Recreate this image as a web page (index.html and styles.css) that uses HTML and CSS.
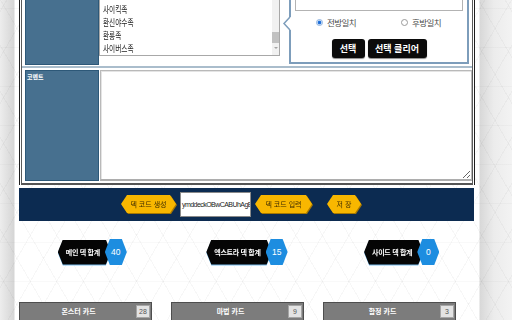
FILE: index.html
```html
<!DOCTYPE html>
<html lang="ko">
<head>
<meta charset="utf-8">
<title>덱 편집</title>
<link rel="stylesheet" href="styles.css">
</head>
<body>
<div class="page">
  <div class="main">
    <div class="main-inner">
      <div class="row-top">
        <div class="label-cell"></div>
        <div class="list">
          <ul class="list-items">
            <li><span>사이킥족</span></li>
            <li><span>환신야수족</span></li>
            <li><span>환룡족</span></li>
            <li><span>사이버스족</span></li>
          </ul>
          <div class="scrollbar">
            <div class="thumb"></div>
            <div class="arrow-down"></div>
          </div>
        </div>
        <div class="callout">
          <svg class="callout-arrow" width="10" height="13" viewBox="0 0 10 13">
            <polygon points="8,0 2,6.5 8,13 10,13 10,0" fill="#fff"/>
            <polyline points="8,0 2,6.5 8,13" fill="none" stroke="#7d9dbb" stroke-width="1.5"/>
          </svg>
          <div class="callout-box"></div>
          <div class="radios">
            <div class="radio-item"><span class="radio on"></span><span class="radio-label">전방일치</span></div>
            <div class="radio-item"><span class="radio"></span><span class="radio-label">후방일치</span></div>
          </div>
          <div class="callout-buttons">
            <button class="btn-black btn-sel">선택</button>
            <button class="btn-black btn-clear">선택 클리어</button>
          </div>
        </div>
      </div>
      <div class="divider"></div>
      <div class="row-comment">
        <div class="label-cell"><span class="label-text">코멘트</span></div>
        <textarea class="comment"></textarea>
      </div>
    </div>
  </div>

  <div class="codebar">
    <div class="ybtn ybtn-gen"><span class="ybtn-face">덱 코드 생성</span></div>
    <div class="code-input">ymddeckOBwCABUhAgE</div>
    <div class="ybtn ybtn-in"><span class="ybtn-face">덱 코드 입력</span></div>
    <div class="ybtn ybtn-save"><span class="ybtn-face">저 장</span></div>
  </div>

  <div class="totals">
    <div class="total">
      <div class="hex-wrap"><span class="hex-black">메인 덱 합계</span></div>
      <span class="badge">40</span>
    </div>
    <div class="total">
      <div class="hex-wrap"><span class="hex-black">엑스트라 덱 합계</span></div>
      <span class="badge">15</span>
    </div>
    <div class="total">
      <div class="hex-wrap"><span class="hex-black">사이드 덱 합계</span></div>
      <span class="badge">0</span>
    </div>
  </div>

  <div class="cards">
    <div class="card-col">
      <div class="card-head"><span class="card-title">몬스터 카드</span><span class="card-count">28</span></div>
    </div>
    <div class="card-col">
      <div class="card-head"><span class="card-title">마법 카드</span><span class="card-count">9</span></div>
    </div>
    <div class="card-col">
      <div class="card-head"><span class="card-title">함정 카드</span><span class="card-count">3</span></div>
    </div>
  </div>
</div>
</body>
</html>
```

FILE: styles.css
```css
html, body {
  margin: 0;
  padding: 0;
}

body {
  height: 320px;
  overflow: hidden;
  background:
    repeating-linear-gradient(60deg, transparent 0 22px, rgba(0,0,0,0.03) 22px 23px),
    repeating-linear-gradient(-60deg, transparent 0 22px, rgba(0,0,0,0.03) 22px 23px),
    repeating-linear-gradient(0deg, transparent 0 38px, rgba(0,0,0,0.025) 38px 39px),
    linear-gradient(to right, #ededed 0, #d5d5d5 14px, #ffffff 15px, #ffffff 479px, #d8d8d8 480px, #ececec 494px, #f3f3f3 512px);
  font-family: "Noto Sans CJK KR", "Liberation Sans", sans-serif;
}

.page {
  margin-left: 15px;
  width: 464px;
}

/* main framed table */
.main {
  margin-left: 4px;
  width: 456px;
  box-sizing: border-box;
  border-left: 1px solid #1e1e1e;
  border-right: 1px solid #1e1e1e;
  padding: 0 1px;
  margin-bottom: 3px;
  background: #fff;
}

.main-inner {
  border-left: 1px solid #5a5a5a;
  border-right: 1px solid #5a5a5a;
  border-bottom: 2px solid #555;
  padding: 0 0 2px 3px;
}

.label-cell {
  width: 74px;
  box-sizing: border-box;
  background: #47708f;
  border: 1px solid #2d5878;
  border-top: 0;
  flex: none;
}

.row-top {
  display: flex;
  height: 65px;
}

.row-top .label-cell {
  height: 65px;
}

/* list box */
.list {
  width: 181px;
  height: 56px;
  box-sizing: border-box;
  border: 1px solid #a8a8a8;
  border-top: 0;
  display: flex;
  background: #fff;
  flex: none;
}

.list-items {
  list-style: none;
  margin: 0;
  padding: 0 0 0 3px;
  flex: 1;
  overflow: hidden;
}

.list-items li {
  height: 13px;
  line-height: 13px;
  white-space: nowrap;
}

.list-items span {
  display: inline-block;
  font-size: 9.5px;
  color: #222;
  transform: scaleX(0.7);
  transform-origin: left center;
}

.scrollbar {
  width: 7px;
  background: #f1f1f1;
  display: flex;
  flex-direction: column;
  align-items: center;
}

.thumb {
  width: 7px;
  height: 11px;
  margin-top: 32px;
  background: #c1c1c1;
}

.arrow-down {
  margin-top: 4px;
  width: 0;
  height: 0;
  border-left: 2px solid transparent;
  border-right: 2px solid transparent;
  border-top: 2px solid #a3a3a3;
}

/* callout panel */
.callout {
  position: relative;
  margin-left: 9px;
  width: 180px;
  height: 64px;
  box-sizing: border-box;
  border: 2px solid #7d9dbb;
  border-top: 0;
  background: #fff;
  flex: none;
  display: flex;
  flex-direction: column;
}

.callout-arrow {
  position: absolute;
  left: -9px;
  top: 17px;
}

.callout-box {
  margin: 0 4px;
  height: 11px;
  box-sizing: border-box;
  border: 1px solid #b3b3b3;
  border-top: 0;
}

.radios {
  display: grid;
  grid-template-columns: 85px 1fr;
  margin-top: 5px;
  height: 12px;
  padding-left: 25px;
}

.radio-item {
  display: flex;
  align-items: center;
  gap: 4px;
}

.radio {
  width: 7px;
  height: 7px;
  box-sizing: border-box;
  border-radius: 50%;
  border: 1px solid #9a9a9a;
  background: #fff;
  flex: none;
}

.radio.on {
  border-color: #8fb4e0;
  background: radial-gradient(circle, #1966d2 0, #2a7ae0 45%, #cfe0f5 60%, #ffffff 100%);
}

.radio-label {
  font-size: 8.5px;
  letter-spacing: -0.6px;
  color: #4a4a4a;
  line-height: 12px;
}

.callout-buttons {
  display: flex;
  justify-content: center;
  gap: 3px;
  margin-top: 11px;
}

.btn-black {
  height: 19px;
  border: 0;
  border-radius: 3px;
  background: #0b0b0b;
  color: #fff;
  font-family: "Noto Sans CJK KR", sans-serif;
  font-weight: bold;
  font-size: 9px;
  line-height: 19px;
  padding: 0;
  box-shadow: 0 1px 1px #8a8a8a;
}

.btn-sel {
  width: 33px;
}

.btn-clear {
  width: 59px;
}

.divider {
  margin: 1px 0 2px -3px;
  height: 2px;
  background: #aabdcc;
}

/* comment row */
.row-comment {
  display: flex;
  height: 111px;
}

.row-comment .label-cell {
  height: 111px;
  border-top: 1px solid #2d5878;
  padding: 2px 0 0 1px;
}

.label-text {
  display: block;
  font-size: 6px;
  font-weight: bold;
  color: #fff;
  line-height: 7px;
}

.comment {
  margin: 0 0 0 1px;
  width: 372px;
  height: 111px;
  box-sizing: border-box;
  border: 1px solid #b9b9b9;
  border-bottom: 2px solid #adadad;
  box-shadow: inset 1px 1px 0 #e4e4e4;
  padding: 0;
  resize: both;
  background: #fff;
}

/* deck code bar */
.codebar {
  margin-left: 4px;
  width: 455px;
  height: 33px;
  background: #0c2b51;
  display: flex;
  align-items: center;
  padding-left: 102px;
  box-sizing: border-box;
}

.ybtn {
  filter: drop-shadow(1px 1px 0 #a77800);
  height: 19px;
  flex: none;
}

.ybtn-face {
  display: flex;
  align-items: center;
  justify-content: center;
  height: 18px;
  background: #f8b700;
  clip-path: polygon(6px 0, calc(100% - 6px) 0, 100% 50%, calc(100% - 6px) 100%, 6px 100%, 0 50%);
  font-size: 7px;
  color: #3b2a00;
  white-space: nowrap;
}

.ybtn-gen .ybtn-face { width: 55px; }
.ybtn-in .ybtn-face { width: 57px; }
.ybtn-save .ybtn-face { width: 34px; }

.code-input {
  margin: 0 4px;
  width: 71px;
  height: 25px;
  box-sizing: border-box;
  background: #fff;
  border: 1px solid #8a8a8a;
  font-family: "Liberation Sans", sans-serif;
  font-size: 7px;
  letter-spacing: -0.55px;
  line-height: 23px;
  color: #222;
  padding-left: 1px;
  overflow: hidden;
  white-space: nowrap;
  flex: none;
}

.ybtn-save {
  margin-left: 15px;
}

/* totals */
.totals {
  margin-top: 18px;
  display: grid;
  grid-template-columns: repeat(3, 1fr);
  justify-items: center;
  height: 26px;
}

.total {
  display: flex;
  align-items: center;
}

.hex-wrap {
  filter: drop-shadow(0 1px 0 #78bdee);
}

.hex-black {
  display: flex;
  align-items: center;
  height: 25px;
  padding: 0 11px 0 8px;
  background: #050505;
  clip-path: polygon(5px 0, calc(100% - 5px) 0, 100% 50%, calc(100% - 5px) 100%, 5px 100%, 0 50%);
  color: #fff;
  font-weight: bold;
  font-size: 7px;
  letter-spacing: -0.3px;
  white-space: nowrap;
}

.badge {
  margin-left: -6px;
  width: 22px;
  height: 26px;
  display: flex;
  align-items: center;
  justify-content: center;
  background: #1d8de0;
  clip-path: polygon(5px 0, calc(100% - 5px) 0, 100% 50%, calc(100% - 5px) 100%, 5px 100%, 0 50%);
  color: #fff;
  font-family: "Liberation Sans", sans-serif;
  font-size: 8.5px;
  position: relative;
}

/* card sections */
.cards {
  margin-top: 37px;
  margin-left: 4px;
  display: grid;
  grid-template-columns: repeat(3, 133px);
  column-gap: 19px;
}

.card-head {
  height: 20px;
  box-sizing: border-box;
  background: #7c7c7c;
  border: 1px solid #4e4e4e;
  display: flex;
  align-items: flex-start;
  padding: 2px 1px 0 1px;
}

.card-title {
  flex: 1;
  text-align: center;
  color: #fff;
  font-weight: bold;
  font-size: 7px;
  line-height: 13px;
}

.card-count {
  width: 14px;
  height: 13px;
  box-sizing: border-box;
  background: #e3e3e3;
  border: 1px solid #a5a5a5;
  color: #555;
  font-family: "Liberation Sans", sans-serif;
  font-size: 7px;
  line-height: 11px;
  text-align: center;
}
```
